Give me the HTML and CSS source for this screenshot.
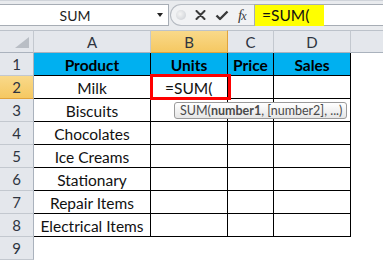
FILE: index.html
```html
<!DOCTYPE html>
<html>
<head>
<meta charset="utf-8">
<link rel="stylesheet" href="styles.css">
</head>
<body>
<div class="app">
  <div class="fbar">
    <div class="namebox">
      <span class="nb-text">SUM</span>
      <span class="nb-arrow"></span>
    </div>
    <div class="knob"><span class="knob-dot"></span></div>
    <div class="fbtns">
      <svg class="ic ic-x" width="11" height="10" viewBox="0 0 11 10"><path d="M1.5 1 L9.5 9 M9.5 1 L1.5 9" stroke="#3a3a3a" stroke-width="2" stroke-linecap="round"/></svg>
      <svg class="ic ic-ok" width="14" height="11" viewBox="0 0 14 11"><path d="M1.5 5.5 L5 9 L12.5 1.5" fill="none" stroke="#3a3a3a" stroke-width="2.4" stroke-linejoin="round"/></svg>
      <span class="fx"><i>f</i><i class="fx-x">x</i></span>
    </div>
    <div class="finput"><span class="fhl">=SUM(</span></div>
  </div>
  <div class="sheet">
    <div class="ch corner"><span class="tri"></span></div>
    <div class="ch">A</div>
    <div class="ch sel">B</div>
    <div class="ch">C</div>
    <div class="ch">D</div>
    <div class="ch last"></div>

    <div class="rh">1</div>
    <div class="c t hd">Product</div>
    <div class="c t hd">Units</div>
    <div class="c t hd">Price</div>
    <div class="c t hd">Sales</div>
    <div class="c"></div>

    <div class="rh sel">2</div>
    <div class="c t">Milk</div>
    <div class="c t active"><span class="ed">=SUM(</span><span class="redbox"></span></div>
    <div class="c t"></div>
    <div class="c t"></div>
    <div class="c"></div>

    <div class="rh">3</div>
    <div class="c t">Biscuits</div>
    <div class="c t"></div>
    <div class="c t"></div>
    <div class="c t"></div>
    <div class="c"></div>

    <div class="rh">4</div>
    <div class="c t">Chocolates</div>
    <div class="c t"></div>
    <div class="c t"></div>
    <div class="c t"></div>
    <div class="c"></div>

    <div class="rh">5</div>
    <div class="c t">Ice Creams</div>
    <div class="c t"></div>
    <div class="c t"></div>
    <div class="c t"></div>
    <div class="c"></div>

    <div class="rh">6</div>
    <div class="c t">Stationary</div>
    <div class="c t"></div>
    <div class="c t"></div>
    <div class="c t"></div>
    <div class="c"></div>

    <div class="rh">7</div>
    <div class="c t">Repair Items</div>
    <div class="c t"></div>
    <div class="c t"></div>
    <div class="c t"></div>
    <div class="c"></div>

    <div class="rh">8</div>
    <div class="c t">Electrical Items</div>
    <div class="c t"></div>
    <div class="c t"></div>
    <div class="c t"></div>
    <div class="c"></div>

    <div class="rh">9</div>
    <div class="c"></div>
    <div class="c"></div>
    <div class="c"></div>
    <div class="c"></div>
    <div class="c"></div>

    <div class="tip">SUM(<b>number1</b>, [number2], ...)</div>
  </div>
</div>
</body>
</html>
```

FILE: styles.css
```css
* { box-sizing: border-box; }
html, body { margin: 0; padding: 0; }
body {
  width: 383px;
  height: 260px;
  overflow: hidden;
  background: #ffffff;
  font-family: Lato, "Liberation Sans", sans-serif;
}
.app { width: 383px; height: 260px; overflow: hidden; }

/* formula bar */
.fbar {
  height: 30px;
  background: #e9ebee;
  padding-top: 3px;
  display: flex;
  align-items: flex-start;
  border-top: 1px solid #d0d4da;
}
.namebox {
  width: 169px;
  height: 22px;
  background: #ffffff;
  border: 1px solid #a7adb5;
  border-left: none;
  display: flex;
  align-items: center;
  position: relative;
}
.nb-text {
  width: 150px;
  text-align: center;
  font-size: 14px;
  color: #1e1e1e;
}
.nb-arrow {
  width: 0; height: 0;
  margin-left: 7px;
  border-left: 3.5px solid transparent;
  border-right: 3.5px solid transparent;
  border-top: 4px solid #222;
}
.knob {
  width: 18px;
  height: 22px;
  margin-left: 1px;
  background: #f1f2f4;
  border: 1px solid #b5bac1;
  border-right: none;
  border-radius: 11px 0 0 11px;
  display: flex;
  align-items: center;
  justify-content: center;
}
.knob-dot {
  width: 10px; height: 10px;
  border-radius: 50%;
  background: radial-gradient(circle at 40% 40%, #f4f4f4, #c8ccd2);
  margin-left: 2px;
}
.fbtns {
  width: 66px;
  height: 22px;
  background: #f1f2f4;
  border-top: 1px solid #b5bac1;
  border-bottom: 1px solid #b5bac1;
  display: flex;
  align-items: center;
  padding-left: 7px;
  gap: 0;
}
.ic-x { margin-right: 9px; }
.ic-ok { margin-right: 9px; }
.fx {
  font-family: "Liberation Serif", serif;
  font-size: 15px;
  color: #3a3a3a;
  letter-spacing: -1px;
}
.fx-x { font-size: 12px; }
.finput {
  flex: 1;
  height: 22px;
  background: #ffffff;
  border: 1px solid #a7adb5;
  border-right: none;
  display: flex;
}
.fhl {
  background: #ffff00;
  width: 69px;
  height: 21px;
  padding-left: 7px;
  font-size: 15.5px;
  line-height: 21px;
  color: #111;
}

/* sheet */
.sheet {
  position: relative;
  display: grid;
  grid-template-columns: 34px 117px 77px 46px 77px 32px;
  grid-template-rows: 23px;
  grid-auto-rows: 23px;
}
.ch {
  background: #e4e7ec;
  border-top: 1px solid #bcc2ca;
  border-right: 1px solid #c3c8cf;
  border-bottom: 1px solid #aab2bd;
  display: flex;
  align-items: center;
  justify-content: center;
  font-size: 15px;
  color: #2e3440;
}
.ch.last { border-right: none; }
.ch.sel {
  background: linear-gradient(#f9d98a, #f5c862);
  border-right-color: #e1a33c;
  border-bottom-color: #e1a33c;
}
.corner { position: relative; }
.tri {
  position: absolute;
  right: 4px;
  bottom: 4px;
  width: 0; height: 0;
  border-left: 14px solid transparent;
  border-bottom: 11px solid #b9bec5;
}
.rh {
  background: #e4e7ec;
  border-right: 1px solid #aab2bd;
  border-bottom: 1px solid #c3c8cf;
  display: flex;
  align-items: center;
  justify-content: center;
  font-size: 15px;
  color: #2e3440;
}
.rh.sel {
  background: linear-gradient(#f9d98a, #f5c862);
  border-bottom-color: #e1a33c;
}
.c {
  display: flex;
  align-items: center;
  justify-content: center;
  font-size: 15.5px;
  color: #111;
  padding-top: 1px;
}
.c.t {
  border-right: 1px solid #000;
  border-bottom: 1px solid #000;
}
.c.hd {
  background: #00b0f0;
  font-weight: 700;
  color: #000;
}
.active {
  position: relative;
  justify-content: flex-start;
}
.ed { padding-left: 14px; }
.redbox {
  position: absolute;
  left: -1px;
  top: -2px;
  width: 81px;
  height: 26px;
  border: 3px solid #ff0000;
}
.tip {
  position: absolute;
  left: 174px;
  top: 72px;
  width: 173px;
  height: 17px;
  border: 1px solid #9a9a9a;
  border-radius: 3px;
  background: linear-gradient(#ffffff, #e6e6e6);
  font-size: 12.5px;
  line-height: 15px;
  color: #4a4a4a;
  padding-left: 5px;
  white-space: nowrap;
}
.tip b { font-weight: 700; }
```
